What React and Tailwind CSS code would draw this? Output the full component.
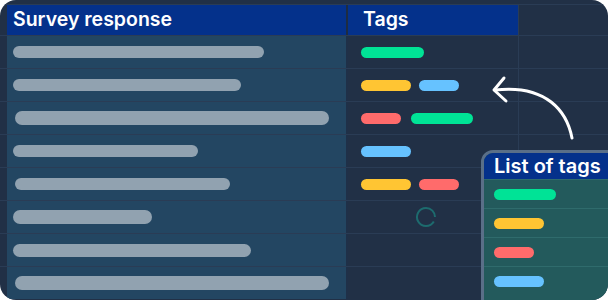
const rows = [
  { bar: { ml: "ml-[6px]", w: "w-[251px]", h: "h-3" }, tags: [["bg-[#00e396]", "w-[63px]"]] },
  { bar: { ml: "ml-[6px]", w: "w-[228px]", h: "h-3" }, tags: [["bg-[#ffc533]", "w-[50px]"], ["bg-[#66c2ff]", "w-[40px]"]] },
  { bar: { ml: "ml-[8px]", w: "w-[314px]", h: "h-[14px]" }, tags: [["bg-[#ff6b6b]", "w-[40px]"], ["bg-[#00e396]", "w-[62px] ml-[2px]"]] },
  { bar: { ml: "ml-[6px]", w: "w-[185px]", h: "h-3" }, tags: [["bg-[#66c2ff]", "w-[50px]"]] },
  { bar: { ml: "ml-[8px]", w: "w-[215px]", h: "h-3" }, tags: [["bg-[#ffc533]", "w-[50px]"], ["bg-[#ff6b6b]", "w-[40px]"]] },
  { bar: { ml: "ml-[6px]", w: "w-[139px]", h: "h-[14px]" }, spinner: true },
  { bar: { ml: "ml-[6px]", w: "w-[238px]", h: "h-[13px]" }, tags: [] },
  { bar: { ml: "ml-[8px]", w: "w-[314px]", h: "h-[14px]" }, tags: [] },
];

const listTags = [
  ["bg-[#00e396]", "w-[62px]"],
  ["bg-[#ffc533]", "w-[50px]"],
  ["bg-[#ff6b6b]", "w-[40px]"],
  ["bg-[#66c2ff]", "w-[50px]"],
];

const Spinner = () => (
  <svg width="22" height="22" viewBox="0 0 22 22" className="ml-[54px]">
    <path d="M11 2 A9 9 0 1 0 18.8 15.5" fill="none" stroke="#1d6b6e" strokeWidth="2" />
    <path d="M11 2 A9 9 0 0 1 20 11" fill="none" stroke="#1d6b6e" strokeWidth="2" />
  </svg>
);

export default function App() {
  return (
    <div className="w-[608px] h-[300px] bg-white">
      <div
        className="relative w-[608px] h-[300px] rounded-[16px] overflow-hidden bg-[#213046] text-white"
        style={{ fontFamily: "Inter, 'Noto Sans', sans-serif" }}
      >
        <div className="h-[5px] border-b border-[#2a3c55]" />
        {/* header row */}
        <div className="flex h-[30px]">
          <div className="w-[7px]" />
          <div className="w-[339px] bg-[#04318b] flex items-center pl-[6px] text-[19.5px] font-semibold">
            Survey response
          </div>
          <div className="w-[2px] bg-[#1d2c42]" />
          <div className="w-[170px] bg-[#04318b] flex items-center pl-[15px] text-[19.5px] font-semibold">
            Tags
          </div>
          <div className="flex-1 border-l border-[#2a3c55]" />
        </div>
        {rows.map((r, i) => (
          <div key={i} className="flex h-[33px] border-t border-[#2a3c55]">
            <div className="w-[7px]" />
            <div className="w-[339px] bg-[#234662] flex items-center">
              <div className={`${r.bar.ml} ${r.bar.w} ${r.bar.h} rounded-full bg-[#91a2b0]`} />
            </div>
            <div className="w-[2px] bg-[#1f3048]" />
            <div className="w-[170px] flex items-center gap-2 pl-[13px]">
              {r.spinner ? (
                <Spinner />
              ) : (
                r.tags.map(([c, w], j) => <div key={j} className={`${c} ${w} h-[11px] rounded-full`} />)
              )}
            </div>
            <div className="flex-1 border-l border-[#2a3c55]" />
          </div>
        ))}

        {/* arrow */}
        <svg className="absolute left-[485px] top-[70px]" width="100" height="80" viewBox="0 0 100 80">
          <path d="M87 68 C82 42 62 14 10 20" fill="none" stroke="white" strokeWidth="3" strokeLinecap="round" />
          <path d="M19 8 L9 20 L21 31" fill="none" stroke="white" strokeWidth="3" strokeLinecap="round" strokeLinejoin="round" />
        </svg>

        {/* list of tags panel */}
        <div className="absolute left-[481px] top-[150px] w-[140px] h-[160px] border-[3px] border-[#5a6f88] rounded-tl-[12px] bg-[#235a5c] overflow-hidden">
          <div className="h-[26px] bg-[#04318b] flex items-center pl-[10px] text-[20px] font-semibold">
            List of tags
          </div>
          {listTags.map(([c, w], i) => (
            <div key={i} className="h-[29px] flex items-center pl-[10px] border-t border-[#2f6b6c]">
              <div className={`${c} ${w} h-[11px] rounded-full`} />
            </div>
          ))}
        </div>
      </div>
    </div>
  );
}
